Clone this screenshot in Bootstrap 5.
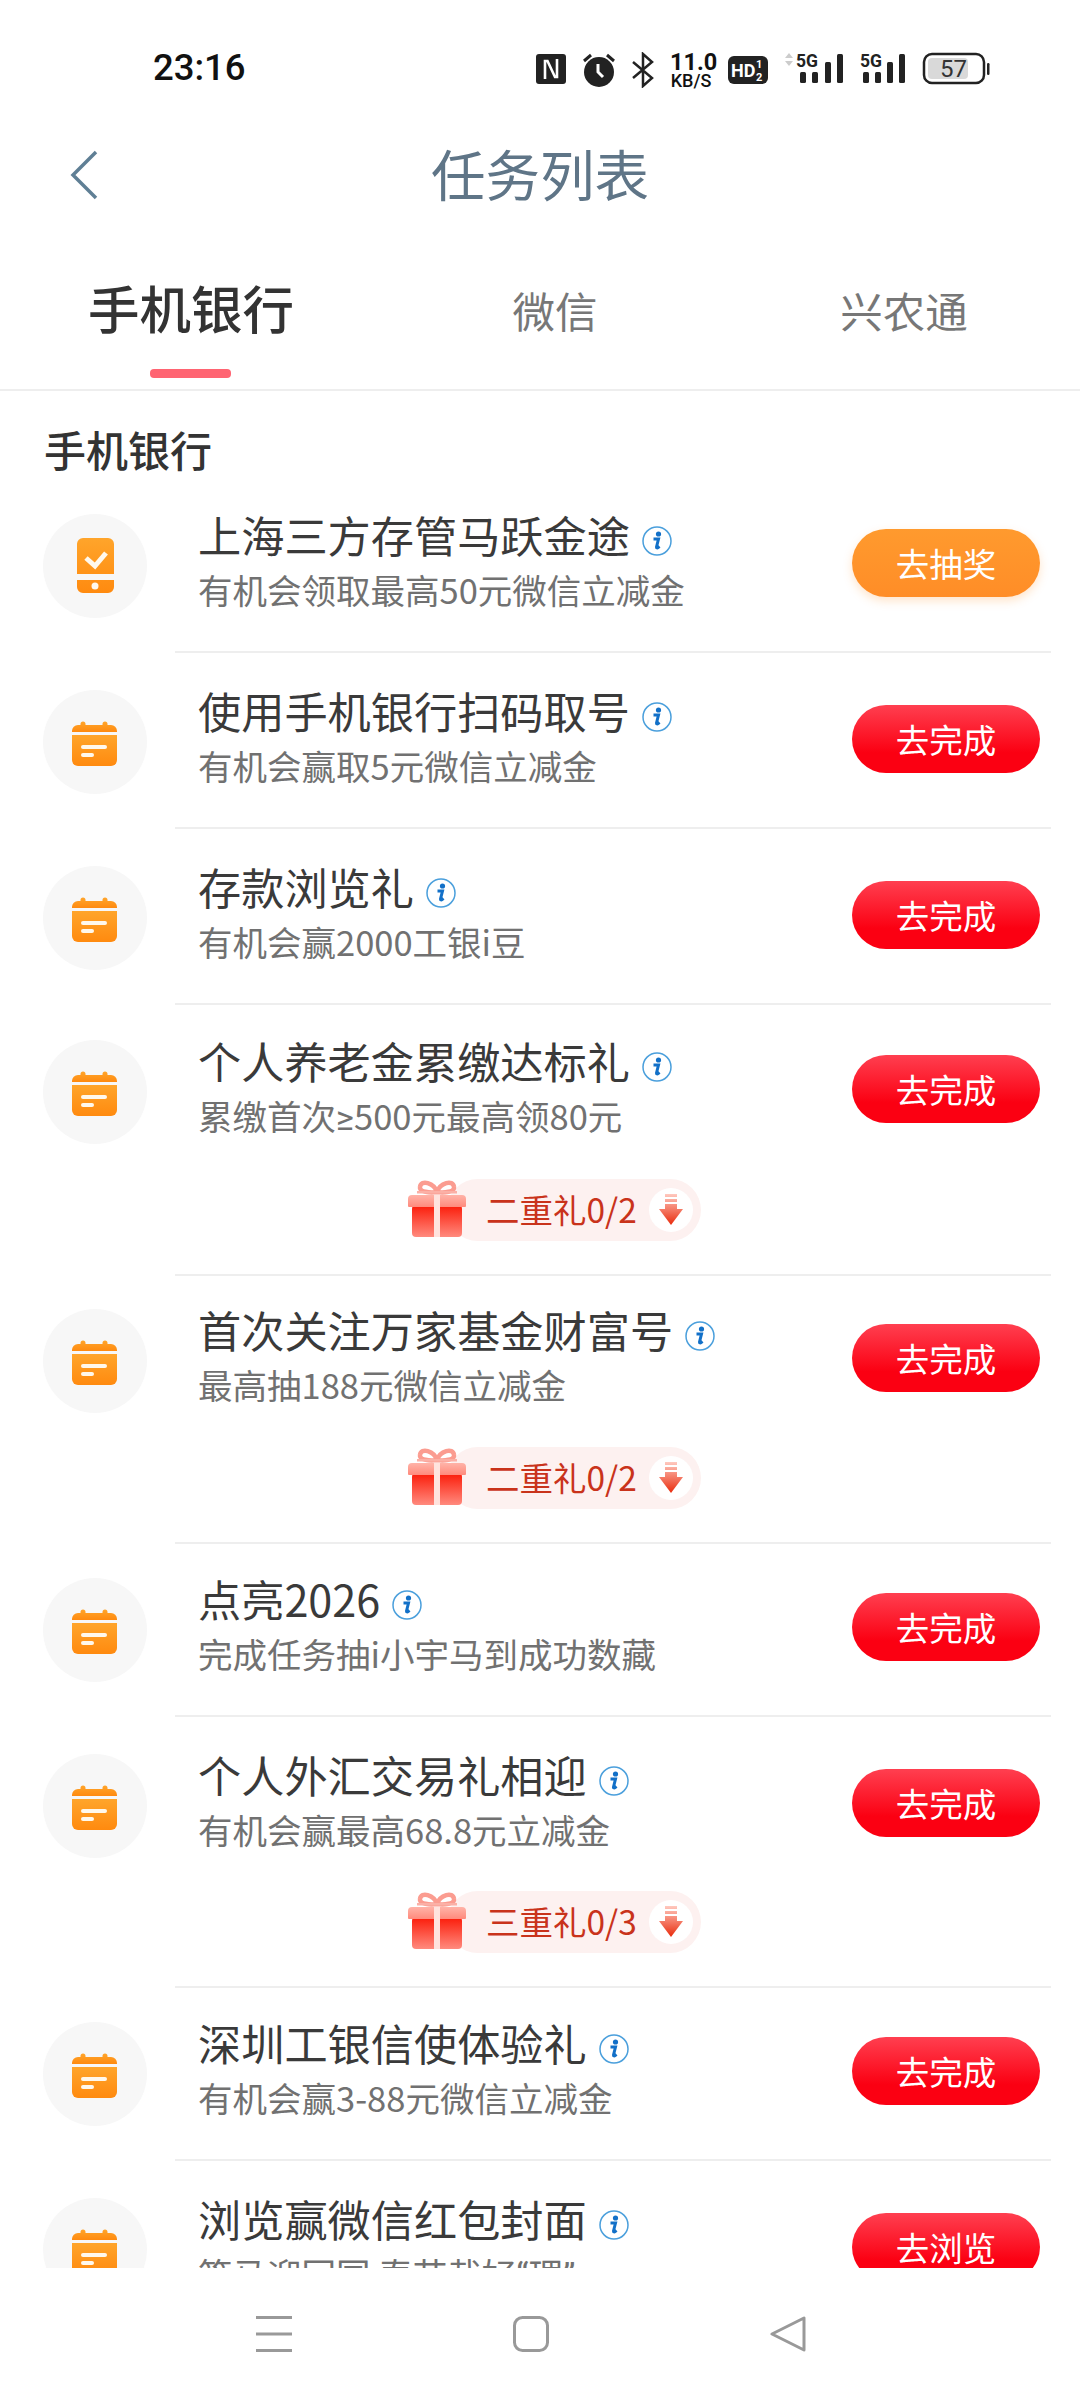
<!DOCTYPE html>
<html lang="zh-CN">
<head>
  <meta charset="UTF-8" />
  <title>任务列表</title>
  <link href="https://cdn.jsdelivr.net/npm/bootstrap@5.3.0/dist/css/bootstrap.min.css" rel="stylesheet" />
  <style>
    html, body { height: 2400px; overflow: hidden; }
    body { width: 1080px; background: #fff; font-family: "Noto Sans CJK SC", "Noto Sans", sans-serif; color: #333; }
    .status-strip { height: 102px; padding: 48px 0 0 153px; font-family: Roboto, sans-serif; color: #111; }
    .status-time { width: 383px; font-size: 36.5px; font-weight: 500; line-height: 40px; }
    .status-icon { margin-top: 4px; flex: none; }
    .status-tall { margin-top: 0; flex: none; }
    .net-speed { width: 42px; margin-left: 16px; margin-top: 4px; text-align: center; }
    .net-speed b { display: block; font-size: 23.5px; line-height: 20px; font-weight: 700; }
    .net-speed i { display: block; font-size: 18px; line-height: 18px; font-style: normal; font-weight: 500; }
    .page-head { height: 146px; padding-top: 41px; }
    .page-title { font-size: 54.5px; line-height: 60px; color: #5f7587; }
    .back-btn { left: 69px; top: 47px; }
    .tab-bar { height: 143px; border-bottom: 2px solid #eee; }
    .tab-link { font-size: 42.5px; line-height: 60px; color: #777; padding-top: 32px; text-align: center; }
    .tab-link.is-on { font-size: 51.5px; font-weight: 500; color: #333; padding-top: 29px; }
    .tab-a { width: 382px; } .tab-b { width: 346px; } .tab-c { width: 352px; }
    .tab-mark { width: 81px; height: 9px; left: 150px; bottom: 11px; background: #ff6472; border-radius: 4px; }
    .task-scroll { height: 1877px; overflow: hidden; }
    .group-name { font-size: 42px; line-height: 60px; font-weight: 500; padding: 28px 0 0 44px; height: 86px; color: #333; }
    .task-item { --up: 0px; --main: 174px; }
    .shift-2 { --up: 2px; } .shift-3 { --up: 3px; } .shift-4 { --up: 4px; }
    .main-171 { --main: 171px; }
    .task-side { width: 175px; padding: calc(37px - var(--up)) 0 0 43px; flex: none; }
    .task-disc { width: 104px; height: 104px; border-radius: 50%; background: #f7f7f7; }
    .task-body { width: 876px; flex: none; border-bottom: 2px solid #eee; }
    .task-main { height: var(--main); padding: calc(28px - var(--up)) 11px 0 23px; }
    .task-name { font-size: 43.2px; line-height: 58px; color: #3a3a3a; }
    .task-note { font-size: 34.5px; line-height: 52px; color: #717171; }
    .latin-char { font-family: Roboto, sans-serif; }
    .tip-icon { margin: 21px 0 0 12px; flex: none; }
    .go-btn { width: 188px; height: 68px; margin-top: 24px; padding: 0; border: 0; border-radius: 34px; color: #fff; font-size: 33.5px; line-height: 64px; flex: none; }
    .go-btn.is-red, .go-btn.is-red:hover { background: linear-gradient(#ff3f50, #fb0012 70%); color: #fff; }
    .go-btn.is-orange, .go-btn.is-orange:hover { background: linear-gradient(#ff9a2e, #ff8d27); box-shadow: 0 4px 10px rgba(255, 150, 50, .25); color: #fff; }
    .gift-row { height: 95px; padding-left: 232px; }
    .gift-chip { width: 294px; height: 62px; }
    .gift-pill { left: 40px; right: 0; top: 0; bottom: 0; background: #fdf1f0; border-radius: 31px; }
    .gift-text { left: 79px; top: 0; font-size: 33.5px; line-height: 60px; color: #c9331b; white-space: nowrap; }
    .gift-down { right: 8px; top: 9px; width: 44px; height: 44px; border-radius: 50%; background: #fff; }
    .bottom-nav { height: 132px; background: #fff; padding: 48px 0 0 256px; }
    .bottom-nav svg { flex: none; }
    .nav-gap { margin-left: 221px; }
  </style>
</head>
<body>
  <!-- shared icons -->
  <svg width="0" height="0" class="position-absolute">
    <defs>
      <linearGradient id="orangeFill" x1="0" y1="0" x2="0" y2="1"><stop offset="0" stop-color="#ffa52b" /><stop offset="1" stop-color="#ff8a0f" /></linearGradient>
      <linearGradient id="giftFill" x1="0" y1="0" x2="0" y2="1"><stop offset="0" stop-color="#fb1a08" /><stop offset="1" stop-color="#ff8a7e" /></linearGradient>
      <linearGradient id="giftLid" x1="0" y1="0" x2="0" y2="1"><stop offset="0" stop-color="#ffb3a8" /><stop offset="1" stop-color="#ff8a7c" /></linearGradient>
      <linearGradient id="arrowFill" x1="0" y1="0" x2="0" y2="1"><stop offset="0" stop-color="#ffc9bf" /><stop offset="1" stop-color="#e92b0c" /></linearGradient>
      <symbol id="ico-phone" viewBox="0 0 104 104">
        <path d="M40 24h25a6 6 0 0 1 6 6v30H34V30a6 6 0 0 1 6-6zM34 66h37v7a6 6 0 0 1-6 6H40a6 6 0 0 1-6-6z" fill="url(#orangeFill)" />
        <path d="M43 44l9 8 11-13" fill="none" stroke="#fff8ec" stroke-width="5" />
        <circle cx="52" cy="72" r="3.500" fill="#fff8ec" />
      </symbol>
      <symbol id="ico-cal" viewBox="0 0 104 104">
        <path d="M35 35h2.500v-1a2.500 2.500 0 0 1 5 0v1h17v-1a2.500 2.500 0 0 1 5 0v1H68a6 6 0 0 1 6 6v1H29v-1a6 6 0 0 1 6-6z" fill="url(#orangeFill)" />
        <path d="M29 45h45v25a6 6 0 0 1-6 6H35a6 6 0 0 1-6-6z" fill="url(#orangeFill)" />
        <rect x="38" y="55" width="26" height="4" rx="2" fill="#fff8ec" />
        <rect x="38" y="63" width="13" height="4" rx="2" fill="#fff8ec" />
      </symbol>
      <symbol id="ico-tip" viewBox="0 0 30 30">
        <circle cx="15" cy="15" r="14" fill="#fff" stroke="#4a9fdc" stroke-width="1.500" />
        <circle cx="16.500" cy="8" r="2.600" fill="#1270c8" />
        <path d="M11.500 13h5l-2 8c-.2 1 .8 1.200 1.600.6l1.400-1.200" fill="none" stroke="#1270c8" stroke-width="3" />
      </symbol>
      <symbol id="ico-gift" viewBox="0 0 60 60">
        <path d="M30 13c-3-9-16-13-17-5-1 5 10 6 17 5zM30 13c3-9 16-13 17-5 1 5-10 6-17 5z" fill="none" stroke="#fb9c90" stroke-width="4.500" />
        <path d="M10 12h40v2.500H10z" fill="#fbb0a6" />
        <rect x="5" y="26" width="50" height="32" rx="4" fill="url(#giftFill)" />
        <path d="M1 20a4 4 0 0 1 4-4h50a4 4 0 0 1 4 4v7a1 1 0 0 1-1 1H2a1 1 0 0 1-1-1z" fill="url(#giftLid)" />
        <rect x="27" y="16" width="6" height="42" fill="#ffe3de" />
      </symbol>
      <symbol id="ico-down" viewBox="0 0 24 34">
        <path d="M6 1h12v3H6zM6 6h12v3H6zM6 11h12v5h6L12 32 0 16h6z" fill="url(#arrowFill)" />
      </symbol>
    </defs>
  </svg>

  <!-- status bar -->
  <div class="status-strip d-flex align-items-start">
    <div class="status-time">23:16</div>
    <svg class="status-icon" width="30" height="34" viewBox="0 0 30 34">
      <rect y="2" width="30" height="30" rx="3" fill="#222" />
      <path d="M9 27V9h2.500L19 25h2V7" fill="none" stroke="#fff" stroke-width="2.600" />
    </svg>
    <svg class="status-icon ms-3" width="34" height="36" viewBox="0 0 34 36">
      <circle cx="17" cy="20" r="15" fill="#222" />
      <path d="M16 12v8l5 5" fill="none" stroke="#fff" stroke-width="3" />
      <path d="M2 9l7-6M32 9l-7-6" stroke="#222" stroke-width="3" />
    </svg>
    <svg class="status-icon ms-3" width="22" height="36" viewBox="0 0 22 36">
      <path d="M1 10l19 16-9 8V2l9 8L1 26" fill="none" stroke="#222" stroke-width="2.500" />
    </svg>
    <div class="net-speed"><b>11.0</b><i>KB/S</i></div>
    <svg class="status-icon ms-3" width="40" height="32" viewBox="0 0 40 32">
      <rect y="4" width="40" height="28" rx="6" fill="#222" />
      <text x="3" y="25" font-family="Roboto" font-size="18" font-weight="700" fill="#fff">HD</text>
      <text x="28" y="16" font-family="Roboto" font-size="11" font-weight="700" fill="#fff">1</text>
      <text x="28" y="29" font-family="Roboto" font-size="11" font-weight="700" fill="#fff">2</text>
    </svg>
    <svg class="status-tall ms-3" width="60" height="38" viewBox="0 -4 60 38">
      <path d="M1 6l4-5 4 5zM1 9h8l-4 5z" fill="#ccc" />
      <text x="12" y="15" font-family="Roboto" font-size="18" font-weight="700" fill="#222" textLength="22" lengthAdjust="spacingAndGlyphs">5G</text>
      <rect x="16" y="20" width="6" height="11" rx="1.500" fill="#222" /><rect x="28" y="20" width="6" height="11" rx="1.500" fill="#222" /><rect x="41" y="10" width="6" height="21" rx="1.500" fill="#222" /><rect x="53" y="2" width="6" height="29" rx="1.500" fill="#222" />
    </svg>
    <svg class="status-tall ms-3" width="46" height="38" viewBox="0 -4 46 38">
      <text x="0" y="15" font-family="Roboto" font-size="18" font-weight="700" fill="#222" textLength="22" lengthAdjust="spacingAndGlyphs">5G</text>
      <rect x="3" y="20" width="6" height="11" rx="1.500" fill="#222" /><rect x="15" y="20" width="6" height="11" rx="1.500" fill="#222" /><rect x="27" y="10" width="6" height="21" rx="1.500" fill="#222" /><rect x="39" y="2" width="6" height="29" rx="1.500" fill="#222" />
    </svg>
    <svg class="status-icon ms-3" width="68" height="34" viewBox="0 0 68 34">
      <rect x="2" y="2" width="60" height="29" rx="8" fill="#fff" stroke="#222" stroke-width="2.500" />
      <rect x="6" y="6" width="40" height="21" rx="4" fill="#d9d9d9" />
      <text x="18" y="25" font-family="Roboto" font-size="24" fill="#333">57</text>
      <rect x="65" y="11" width="2.500" height="12" rx="1.200" fill="#222" />
    </svg>
  </div>

  <!-- title -->
  <div class="page-head position-relative d-flex justify-content-center">
    <svg class="back-btn position-absolute" width="32" height="52" viewBox="0 0 32 52"><path d="M27 3L4 26l23 23" fill="none" stroke="#5f7f95" stroke-width="3.500" /></svg>
    <div class="page-title">任务列表</div>
  </div>

  <!-- tabs -->
  <div class="tab-bar d-flex position-relative">
    <div class="tab-link tab-a is-on">手机银行</div>
    <div class="tab-link tab-b">微信</div>
    <div class="tab-link tab-c">兴农通</div>
    <div class="tab-mark position-absolute"></div>
  </div>

  <div class="task-scroll">
    <div class="group-name">手机银行</div>

    <div class="task-item d-flex">
      <div class="task-side"><div class="task-disc"><svg width="104" height="104"><use href="#ico-phone" /></svg></div></div>
      <div class="task-body">
        <div class="task-main d-flex justify-content-between">
          <div>
            <div class="task-name d-flex align-items-start">上海三方存管马跃金途<svg class="tip-icon" width="30" height="30"><use href="#ico-tip" /></svg></div>
            <div class="task-note">有机会领取最高50元微信立减金</div>
          </div>
          <button class="btn go-btn is-orange">去抽奖</button>
        </div>
      </div>
    </div>

    <div class="task-item d-flex">
      <div class="task-side"><div class="task-disc"><svg width="104" height="104"><use href="#ico-cal" /></svg></div></div>
      <div class="task-body">
        <div class="task-main d-flex justify-content-between">
          <div>
            <div class="task-name d-flex align-items-start">使用手机银行扫码取号<svg class="tip-icon" width="30" height="30"><use href="#ico-tip" /></svg></div>
            <div class="task-note">有机会赢取5元微信立减金</div>
          </div>
          <button class="btn go-btn is-red">去完成</button>
        </div>
      </div>
    </div>

    <div class="task-item d-flex">
      <div class="task-side"><div class="task-disc"><svg width="104" height="104"><use href="#ico-cal" /></svg></div></div>
      <div class="task-body">
        <div class="task-main d-flex justify-content-between">
          <div>
            <div class="task-name d-flex align-items-start">存款浏览礼<svg class="tip-icon" width="30" height="30"><use href="#ico-tip" /></svg></div>
            <div class="task-note">有机会赢2000工银i豆</div>
          </div>
          <button class="btn go-btn is-red">去完成</button>
        </div>
      </div>
    </div>

    <div class="task-item shift-2 d-flex">
      <div class="task-side"><div class="task-disc"><svg width="104" height="104"><use href="#ico-cal" /></svg></div></div>
      <div class="task-body">
        <div class="task-main d-flex justify-content-between">
          <div>
            <div class="task-name d-flex align-items-start">个人养老金累缴达标礼<svg class="tip-icon" width="30" height="30"><use href="#ico-tip" /></svg></div>
            <div class="task-note">累缴首次<span class="latin-char">≥</span>500元最高领80元</div>
          </div>
          <button class="btn go-btn is-red">去完成</button>
        </div>
        <div class="gift-row">
          <div class="gift-chip position-relative">
            <div class="gift-pill position-absolute"></div>
            <svg class="position-absolute top-0 start-0" width="60" height="60"><use href="#ico-gift" /></svg>
            <div class="gift-text position-absolute">二重礼0/2</div>
            <div class="gift-down position-absolute d-flex align-items-center justify-content-center"><svg width="24" height="34"><use href="#ico-down" /></svg></div>
          </div>
        </div>
      </div>
    </div>

    <div class="task-item shift-4 main-171 d-flex">
      <div class="task-side"><div class="task-disc"><svg width="104" height="104"><use href="#ico-cal" /></svg></div></div>
      <div class="task-body">
        <div class="task-main d-flex justify-content-between">
          <div>
            <div class="task-name d-flex align-items-start">首次关注万家基金财富号<svg class="tip-icon" width="30" height="30"><use href="#ico-tip" /></svg></div>
            <div class="task-note">最高抽188元微信立减金</div>
          </div>
          <button class="btn go-btn is-red">去完成</button>
        </div>
        <div class="gift-row">
          <div class="gift-chip position-relative">
            <div class="gift-pill position-absolute"></div>
            <svg class="position-absolute top-0 start-0" width="60" height="60"><use href="#ico-gift" /></svg>
            <div class="gift-text position-absolute">二重礼0/2</div>
            <div class="gift-down position-absolute d-flex align-items-center justify-content-center"><svg width="24" height="34"><use href="#ico-down" /></svg></div>
          </div>
        </div>
      </div>
    </div>

    <div class="task-item shift-3 main-171 d-flex">
      <div class="task-side"><div class="task-disc"><svg width="104" height="104"><use href="#ico-cal" /></svg></div></div>
      <div class="task-body">
        <div class="task-main d-flex justify-content-between">
          <div>
            <div class="task-name d-flex align-items-start">点亮2026<svg class="tip-icon" width="30" height="30"><use href="#ico-tip" /></svg></div>
            <div class="task-note">完成任务抽i小宇马到成功数藏</div>
          </div>
          <button class="btn go-btn is-red">去完成</button>
        </div>
      </div>
    </div>

    <div class="task-item d-flex">
      <div class="task-side"><div class="task-disc"><svg width="104" height="104"><use href="#ico-cal" /></svg></div></div>
      <div class="task-body">
        <div class="task-main d-flex justify-content-between">
          <div>
            <div class="task-name d-flex align-items-start">个人外汇交易礼相迎<svg class="tip-icon" width="30" height="30"><use href="#ico-tip" /></svg></div>
            <div class="task-note">有机会赢最高68.8元立减金</div>
          </div>
          <button class="btn go-btn is-red">去完成</button>
        </div>
        <div class="gift-row">
          <div class="gift-chip position-relative">
            <div class="gift-pill position-absolute"></div>
            <svg class="position-absolute top-0 start-0" width="60" height="60"><use href="#ico-gift" /></svg>
            <div class="gift-text position-absolute">三重礼0/3</div>
            <div class="gift-down position-absolute d-flex align-items-center justify-content-center"><svg width="24" height="34"><use href="#ico-down" /></svg></div>
          </div>
        </div>
      </div>
    </div>

    <div class="task-item shift-3 main-171 d-flex">
      <div class="task-side"><div class="task-disc"><svg width="104" height="104"><use href="#ico-cal" /></svg></div></div>
      <div class="task-body">
        <div class="task-main d-flex justify-content-between">
          <div>
            <div class="task-name d-flex align-items-start">深圳工银信使体验礼<svg class="tip-icon" width="30" height="30"><use href="#ico-tip" /></svg></div>
            <div class="task-note">有机会赢3-88元微信立减金</div>
          </div>
          <button class="btn go-btn is-red">去完成</button>
        </div>
      </div>
    </div>

    <div class="task-item d-flex">
      <div class="task-side"><div class="task-disc"><svg width="104" height="104"><use href="#ico-cal" /></svg></div></div>
      <div class="task-body">
        <div class="task-main d-flex justify-content-between">
          <div>
            <div class="task-name d-flex align-items-start">浏览赢微信红包封面<svg class="tip-icon" width="30" height="30"><use href="#ico-tip" /></svg></div>
            <div class="task-note">策马迎回国 春节裁好<span class="latin-char">“</span>理<span class="latin-char">”</span></div>
          </div>
          <button class="btn go-btn is-red">去浏览</button>
        </div>
      </div>
    </div>
  </div>

  <!-- phone nav -->
  <div class="bottom-nav d-flex">
    <svg width="36" height="36" viewBox="0 0 36 36"><path d="M0 1.500h36M0 18h36M0 34.500h36" stroke="#999" stroke-width="3" /></svg>
    <svg class="nav-gap" width="36" height="36" viewBox="0 0 36 36"><rect x="1.500" y="1.500" width="33" height="33" rx="8" fill="none" stroke="#999" stroke-width="3" /></svg>
    <svg class="nav-gap" width="36" height="36" viewBox="0 0 36 36"><path d="M34 2v32L2 18z" fill="none" stroke="#999" stroke-width="3" stroke-linejoin="round" /></svg>
  </div>
</body>
</html>
